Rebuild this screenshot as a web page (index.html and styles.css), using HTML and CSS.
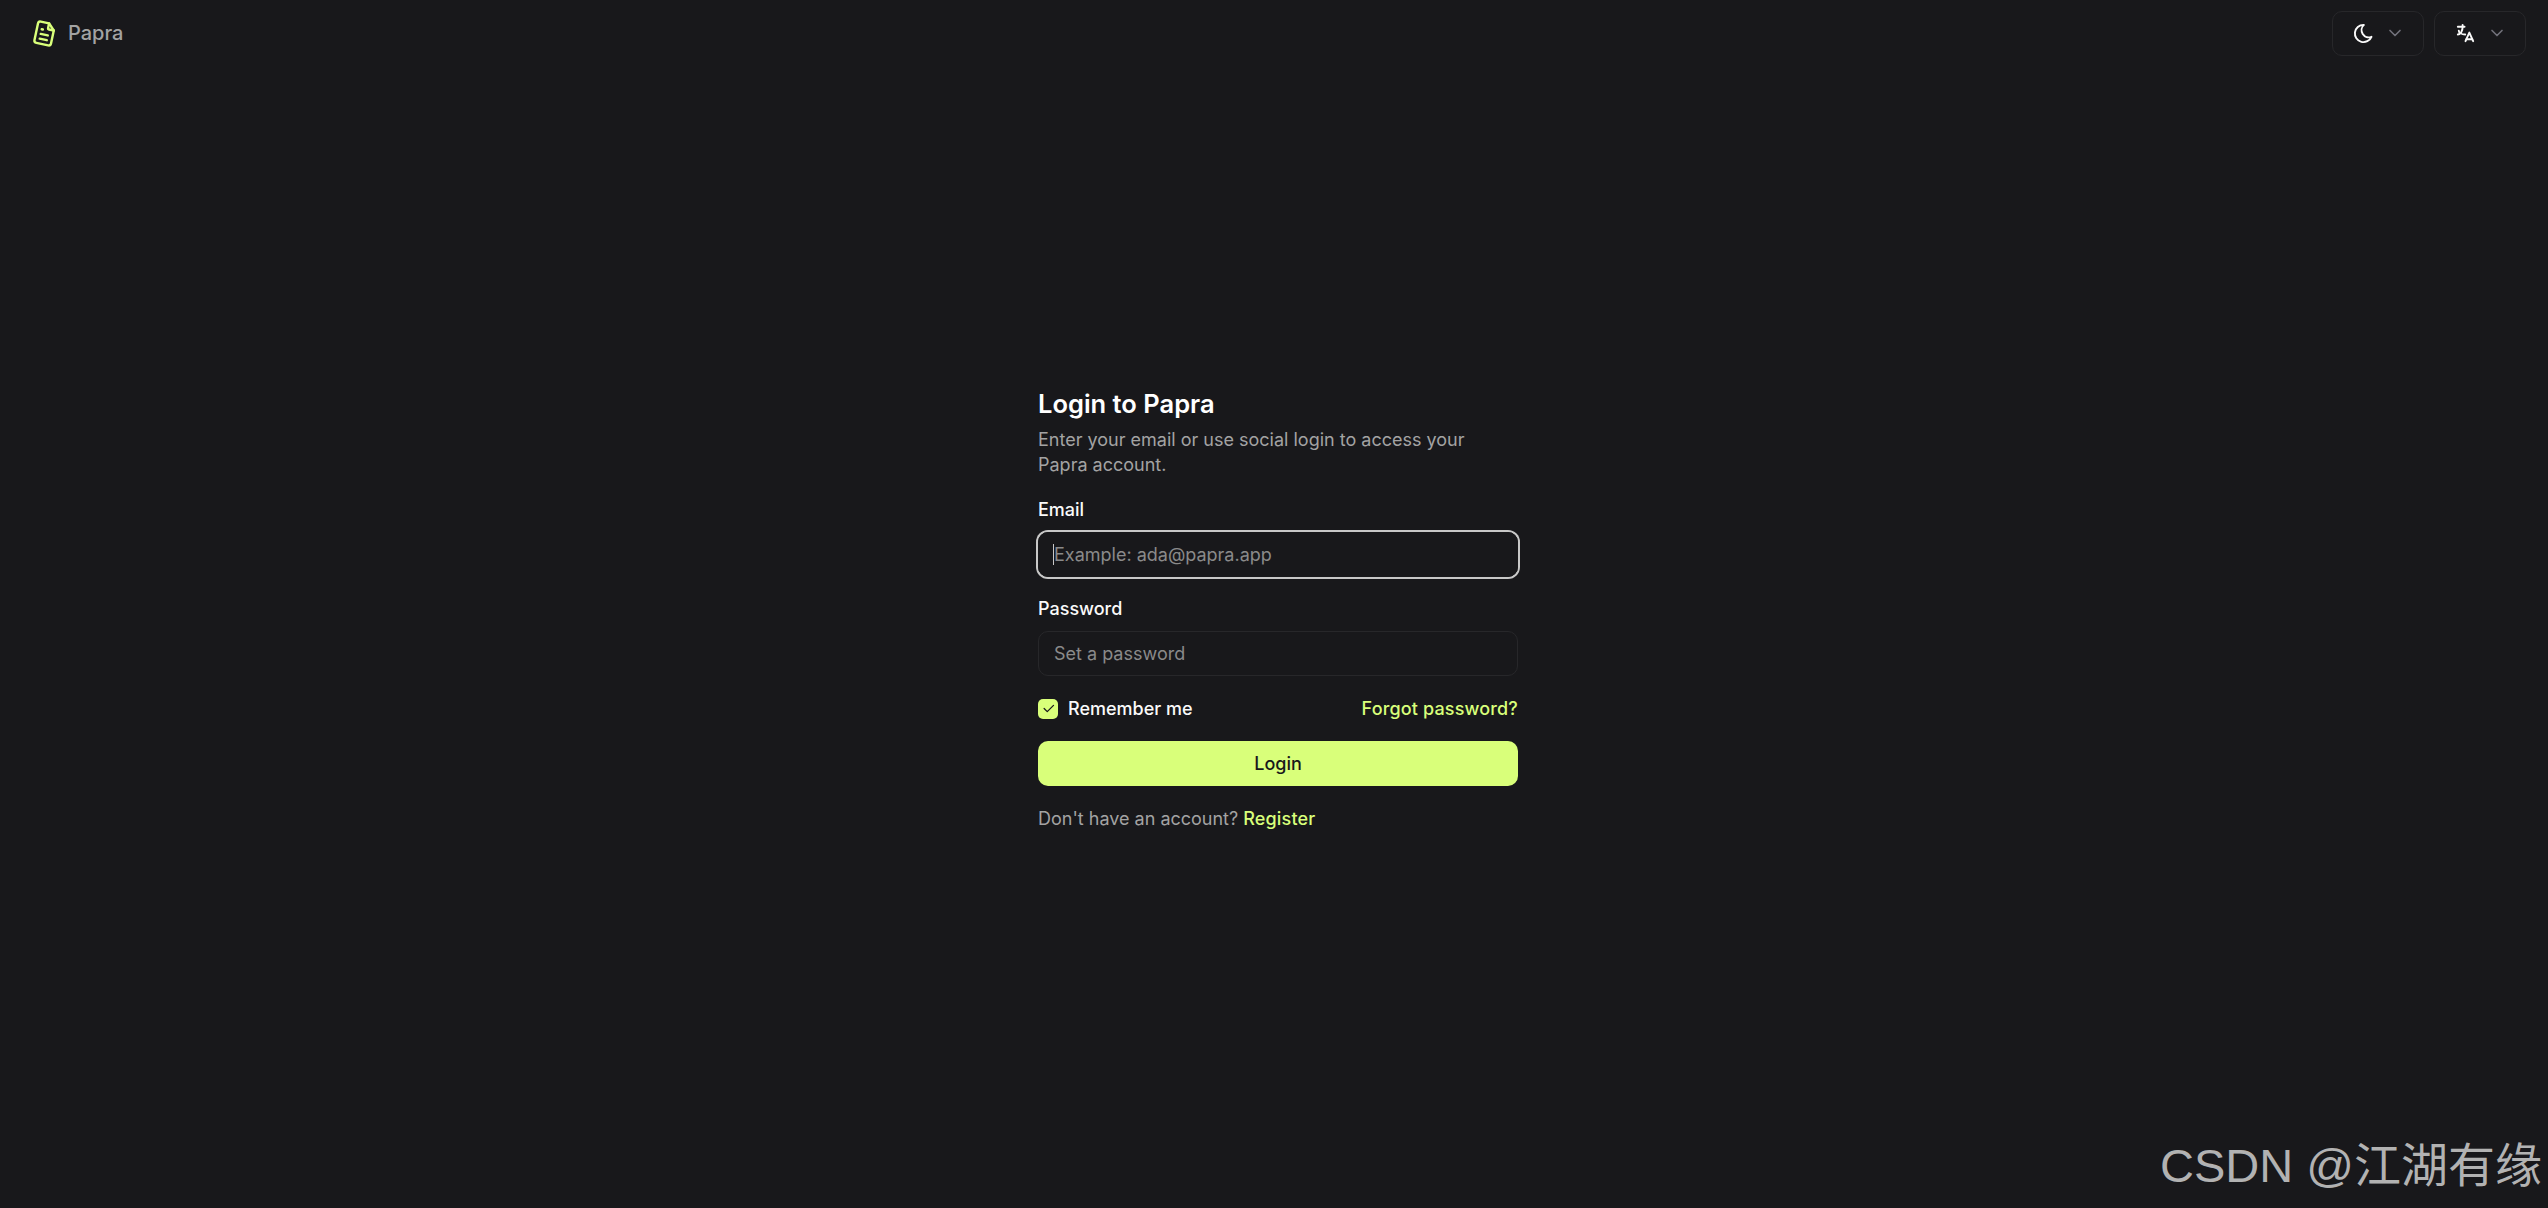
FILE: index.html
```html
<!DOCTYPE html>
<html lang="en">
<head>
<meta charset="UTF-8">
<title>Login to Papra</title>
<link rel="stylesheet" href="styles.css">
</head>
<body>

<header class="topbar">
  <a class="brand" href="#">
    <svg class="brand-icon" viewBox="0 0 24 24">
      <path d="M14 3v4a1 1 0 0 0 1 1h4"/>
      <path d="M17 21h-10a2 2 0 0 1 -2 -2v-14a2 2 0 0 1 2 -2h7l5 5v11a2 2 0 0 1 -2 2z"/>
      <path d="M9 9l1 0"/>
      <path d="M9 13l6 0"/>
      <path d="M9 17l6 0"/>
    </svg>
    <span>Papra</span>
  </a>
  <div class="topbar-actions">
    <button class="select-btn">
      <svg class="icon" viewBox="0 0 24 24">
        <path d="M12 3c.132 0 .263 0 .393 0a7.5 7.5 0 0 0 7.92 12.446a9 9 0 1 1 -8.313 -12.454z"/>
      </svg>
      <svg class="chevron" viewBox="0 0 24 24"><path d="M6 9l6 6l6 -6"/></svg>
    </button>
    <button class="select-btn">
      <svg class="icon" viewBox="0 0 24 24">
        <path d="M4 5h7"/>
        <path d="M9 3v2c0 4.418 -2.239 8 -5 8"/>
        <path d="M5 9c0 2.144 2.952 3.908 6.7 4"/>
        <path d="M12 20l4 -9l4 9"/>
        <path d="M19.1 18h-6.2"/>
      </svg>
      <svg class="chevron" viewBox="0 0 24 24"><path d="M6 9l6 6l6 -6"/></svg>
    </button>
  </div>
</header>

<main class="page">
  <form class="login">
    <h1>Login to Papra</h1>
    <p class="subtitle">Enter your email or use social login to access your Papra account.</p>

    <div class="field">
      <label for="email">Email</label>
      <div class="input-wrap">
        <input id="email" class="input focused" type="text" placeholder="Example: ada@papra.app">
        <span class="caret"></span>
      </div>
    </div>

    <div class="field">
      <label for="password">Password</label>
      <div class="input-wrap">
        <input id="password" class="input" type="password" placeholder="Set a password">
      </div>
    </div>

    <div class="options">
      <label class="remember">
        <span class="checkbox">
          <svg viewBox="0 0 24 24"><path d="M5 12l5 5l10 -10"/></svg>
        </span>
        Remember me
      </label>
      <a class="link" href="#">Forgot password?</a>
    </div>

    <button class="submit" type="button">Login</button>

    <p class="register">Don't have an account? <a class="link" href="#">Register</a></p>
  </form>
</main>

<div class="watermark">CSDN @江湖有缘</div>

</body>
</html>
```

FILE: styles.css
```css
* { box-sizing: border-box; }
html, body { height: 100%; }
body {
  margin: 0;
  background-color: #18181b;
  color: #fafafa;
  font-family: Inter, "Noto Sans", sans-serif;
  font-size: 18px;
  line-height: 25px;
  overflow: hidden;
}
svg {
  fill: none;
  stroke: currentColor;
  stroke-width: 2;
  stroke-linecap: round;
  stroke-linejoin: round;
}
a { text-decoration: none; }

.topbar {
  display: flex;
  justify-content: space-between;
  align-items: center;
  height: 66px;
  padding: 0 22px 0 30px;
}
.brand {
  display: flex;
  align-items: center;
  gap: 9px;
  color: #a3a3a3;
  font-size: 20px;
  font-weight: 500;
}
.brand-icon {
  width: 29px;
  height: 29px;
  color: #d9ff7a;
  transform: rotate(12deg);
}
.topbar-actions { display: flex; gap: 10px; }
.select-btn {
  display: flex;
  align-items: center;
  justify-content: center;
  gap: 10px;
  width: 92px;
  height: 45px;
  background: transparent;
  border: 1px solid #27272a;
  border-radius: 10px;
  color: #fafafa;
}
.icon { width: 23px; height: 23px; }
.chevron { width: 20px; height: 20px; color: #71717a; }

.page {
  display: flex;
  justify-content: center;
  padding: 320px 0 0 8px;
}
.login { width: 480px; }
h1 {
  margin: 0 0 6px;
  font-size: 25.5px;
  line-height: 35px;
  font-weight: 600;
  color: #fff;
}
.subtitle {
  margin: 0 0 23px;
  color: #a3a3a3;
}
.field { margin-bottom: 20px; }
.field + .field { margin-top: 22px; }
.field label {
  display: block;
  margin-bottom: 12px;
  font-weight: 500;
  line-height: 20px;
}
.input-wrap { position: relative; }
.input {
  display: block;
  width: 100%;
  height: 45px;
  padding: 0 15px;
  background: transparent;
  border: 1px solid #27272a;
  border-radius: 10px;
  color: #fafafa;
  font: inherit;
  outline: none;
}
.input::placeholder { color: #8a8a8a; opacity: 1; }
.input.focused { box-shadow: 0 0 0 2px #c8c8c8; border-color: #18181b; }
.caret {
  position: absolute;
  left: 15px;
  top: 12px;
  width: 1px;
  height: 21px;
  background: #c8c8c8;
}
.options {
  display: flex;
  justify-content: space-between;
  align-items: center;
  margin-bottom: 20px;
}
.remember {
  display: flex;
  align-items: center;
  gap: 10px;
  font-weight: 500;
}
.checkbox {
  display: flex;
  align-items: center;
  justify-content: center;
  width: 20px;
  height: 20px;
  border-radius: 5px;
  background: #d9ff7a;
  color: #18181b;
}
.checkbox svg { width: 15px; height: 15px; }
.link { color: #d9ff7a; font-weight: 500; letter-spacing: 0.15px; }
.submit {
  display: block;
  width: 100%;
  height: 45px;
  background: #d9ff7a;
  border: none;
  border-radius: 10px;
  color: #18181b;
  font: inherit;
  font-weight: 500;
}
.register {
  margin: 20px 0 0;
  color: #a3a3a3;
}

.watermark {
  position: absolute;
  right: 6px;
  bottom: 12px;
  color: #b2b2b2;
  font-family: "Liberation Sans", "Noto Sans CJK SC", sans-serif;
  font-size: 47px;
  line-height: 60px;
}
```
